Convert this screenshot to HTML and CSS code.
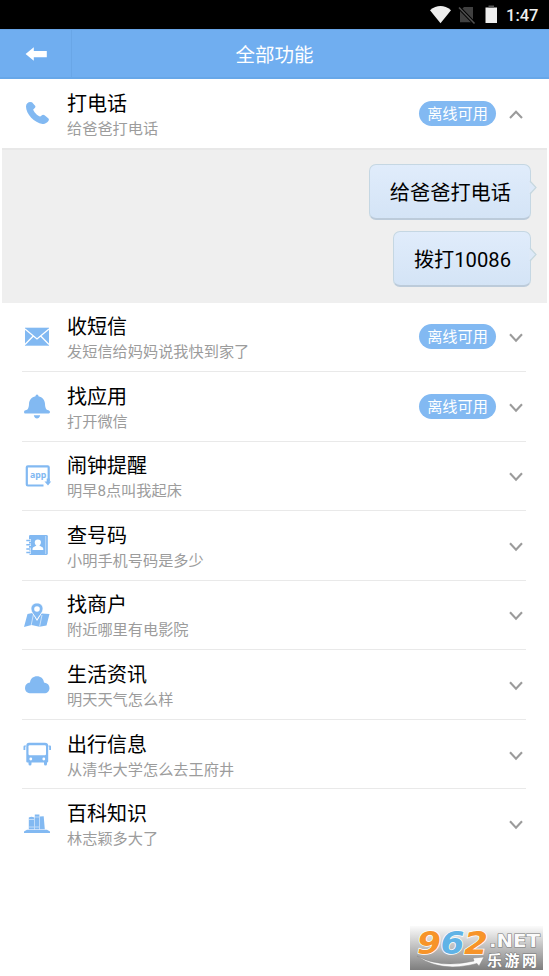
FILE: index.html
```html
<!DOCTYPE html>
<html lang="zh-CN">
<head>
<meta charset="utf-8">
<title>全部功能</title>
<link rel="stylesheet" href="styles.css">
</head>
<body>
<svg class="defs" width="0" height="0">
  <symbol id="down" viewBox="0 0 16 12"><path d="M2 2.2 8 8.6 14 2.2" fill="none" stroke="#9b9b9b" stroke-width="2.1"/></symbol>
  <symbol id="up" viewBox="0 0 16 12"><path d="M2 9 8 2.7 14 9" fill="none" stroke="#9b9b9b" stroke-width="2.1"/></symbol>
</svg>
<div class="status">
  <svg width="72" height="29" viewBox="428 0 72 29">
    <path d="M430 10.2Q440.500 1.800 451 10.200L440.500 23.200Z" fill="#eee"/>
    <path d="M464 7H473V22.300H460V11Z" fill="#404040"/>
    <path d="M459 7.500 474.500 23.500" stroke="#000" stroke-width="3.400"/>
    <path d="M459 7.500 474.500 23.500" stroke="#505050" stroke-width="1.600"/>
    <path d="M485.500 7.500V23H497V7.500Z" fill="#eee"/><path d="M488.500 5.500H494V7.500H488.500Z" fill="#555"/>
  </svg>
  <span class="clock">1:47</span>
</div>
<header class="header">
  <div class="back"><svg width="22" height="16" viewBox="0 0 22 16"><path d="M.6 8 8.800 1.300V5H21.800V11.200H8.800V14.700Z" fill="#fff"/></svg></div>
  <h1>全部功能</h1>
</header>
<main>
  <section class="row open">
    <svg class="icon" viewBox="0 0 30 30"><path d="M4 7.500C4 4.500 6.300 2.900 8.100 2.900L10 3.300 13.300 7Q13.800 8 12.800 9.100L11.200 10.600C11.300 12.500 15.600 17.300 18.300 17.500L20.300 15.900Q21.500 15.300 22.600 16.300L26.500 19.500Q27.500 20.700 26.400 22.100C24.800 24 22.800 25.300 20.500 24.900C12.500 24 3.900 15 4 7.500Z"/></svg>
    <div class="text"><h2>打电话</h2><p>给爸爸打电话</p></div>
    <span class="badge">离线可用</span>
    <svg class="chevron"><use href="#up"/></svg>
  </section>
  <div class="panel">
    <div class="bubble">给爸爸打电话<svg class="tail" viewBox="0 0 8 14"><path d="M0 0 7 6.500 0 13Z" fill="#dde9f8"/><path d="M1 0 7 6.500 1 13" fill="none" stroke="#c5d7df" stroke-width="1.200"/></svg></div>
    <div class="bubble">拨打10086<svg class="tail" viewBox="0 0 8 14"><path d="M0 0 7 6.500 0 13Z" fill="#dde9f8"/><path d="M1 0 7 6.500 1 13" fill="none" stroke="#c5d7df" stroke-width="1.200"/></svg></div>
  </div>
  <section class="row">
    <svg class="icon" viewBox="0 0 30 30"><path d="M3 5.700H27V23.700H3Z"/><path d="M3 7 15 17 27 7M3 22.500 11.300 14M27 22.500 18.700 14" fill="none" stroke="#fff" stroke-width="1.300"/></svg>
    <div class="text"><h2>收短信</h2><p>发短信给妈妈说我快到家了</p></div>
    <span class="badge">离线可用</span>
    <svg class="chevron"><use href="#down"/></svg>
  </section>
  <section class="row">
    <svg class="icon" viewBox="0 0 30 30"><path d="M13.500 5.200Q13.500 3.500 15 3.500T16.500 5.200C20.500 6 22.800 9 23 13 23.200 17 24 18.800 26.500 19.300Q28 19.700 28 21T26.800 22.500H3.200Q2 22.500 2 21T3.500 19.300C6 18.800 6.800 17 7 13 7.200 9 9.500 6 13.500 5.200ZM11.800 24.200H18.200Q17.300 27.500 15 27.500T11.800 24.200Z"/></svg>
    <div class="text"><h2>找应用</h2><p>打开微信</p></div>
    <span class="badge">离线可用</span>
    <svg class="chevron"><use href="#down"/></svg>
  </section>
  <section class="row">
    <svg class="icon" viewBox="0 0 30 30"><path d="M21.500 24.500H5.800Q4.800 24.500 4.800 23.500V6.300Q4.800 5.400 5.800 5.400H25.700Q26.700 5.400 26.700 6.300V20" fill="none" stroke="#82b9f2" stroke-width="2.200"/><path d="M24.700 17.500H27.700V20.500H29.200L26 24.500 22.500 20.500H24.700Z"/><text x="8" y="17" class="app">app</text></svg>
    <div class="text"><h2>闹钟提醒</h2><p>明早8点叫我起床</p></div>
    <svg class="chevron"><use href="#down"/></svg>
  </section>
  <section class="row">
    <svg class="icon" viewBox="0 0 30 30"><rect x="7" y="4.900" width="18.800" height="20" rx="1.300"/><path d="M23.700 6V24" stroke="#fff" stroke-width=".5"/><path d="M4.300 10.500H9M4.300 14.800H9M4.300 19.100H9M4.300 22.500H9" stroke="#fff" stroke-width="2.600"/><path d="M4.300 10.500H8.500M4.300 14.800H8.500M4.300 19.100H8.500M4.300 22.500H8.500" stroke="#82b9f2" stroke-width="1.500"/><path d="M15.800 9.500C20.500 9.500 19 14.500 17.300 15.500L20.800 17.500Q21.400 18 21.300 20H10.500Q10.400 18 11 17.500L14.400 15.500C12.500 14.500 11.500 9.500 15.800 9.500Z" fill="#fff"/></svg>
    <div class="text"><h2>查号码</h2><p>小明手机号码是多少</p></div>
    <svg class="chevron"><use href="#down"/></svg>
  </section>
  <section class="row">
    <svg class="icon" viewBox="0 0 30 30"><path d="M5.500 14 10.500 13 15 21 19.500 13.500 27.500 14 24.500 25.500 17.500 26.800 9.500 25 2 27Z"/><path d="M11.500 14 9.200 25M20 15 17.600 26.500" stroke="#fff" stroke-width=".6"/><path d="M15 3C18.700 3 21 5.500 21 8.800 21 12.500 17.500 15 15 20 12.500 15 9 12.500 9 8.800 9 5.500 11.300 3 15 3Z" stroke="#fff" stroke-width=".8"/><circle cx="15" cy="9" r="2.800" fill="#fff"/></svg>
    <div class="text"><h2>找商户</h2><p>附近哪里有电影院</p></div>
    <svg class="chevron"><use href="#down"/></svg>
  </section>
  <section class="row">
    <svg class="icon" viewBox="0 0 30 30"><path d="M9 23.300C5.500 23.300 3 21.200 3 17.900 3 14.800 5 13 8 12.500 8.500 8.500 11.300 6.300 15 6.300S21.500 8.500 22 12.500C25.500 13 27.500 15 27.500 18S25.500 23.300 22 23.300Z"/></svg>
    <div class="text"><h2>生活资讯</h2><p>明天天气怎么样</p></div>
    <svg class="chevron"><use href="#down"/></svg>
  </section>
  <section class="row">
    <svg class="icon" viewBox="0 0 30 30"><path d="M7 3.800H23Q26.200 3.800 26.200 7V22.500Q26.200 23.500 25 23.500V25Q25 26.500 23.500 26.500T22 25V23.500H9.500V25Q9.500 26.500 8 26.500T6.500 25V23.500H5.500Q4.300 23.500 4.300 22.500V7Q4.300 3.800 7 3.800Z"/><path d="M4 6.500H2.500Q1.500 6.500 1.500 7.800V11H3.300V7.500H4ZM26.500 6.500H28Q29 6.500 29 7.800V11H27.200V7.500H26.500Z"/><rect x="6.500" y="6.300" width="17.500" height="10" rx="1.200" fill="#fff"/><circle cx="8.800" cy="20" r="1.400" fill="#fff"/><circle cx="21.800" cy="20" r="1.400" fill="#fff"/></svg>
    <div class="text"><h2>出行信息</h2><p>从清华大学怎么去王府井</p></div>
    <svg class="chevron"><use href="#down"/></svg>
  </section>
  <section class="row last">
    <svg class="icon" viewBox="0 0 30 30"><path d="M6.800 8.500Q9.500 7 12.300 8.500V20.300H6.800ZM12.800 5.500H17.400V20.300H12.800ZM17.900 7.500 21.700 7.200 22.800 20.300H17.900Z"/><path d="M7 10.500H12M7 18H12M13 8H17M13 18H17" stroke="#fff" stroke-width=".5"/><path d="M5 20.700H25L28 22.500V24H2V22.500Z"/></svg>
    <div class="text"><h2>百科知识</h2><p>林志颖多大了</p></div>
    <svg class="chevron"><use href="#down"/></svg>
  </section>
</main>
<svg class="watermark" viewBox="0 0 133 44">
  <defs><linearGradient id="wm" x1="0" y1="0" x2="0" y2="1"><stop offset="0" stop-color="#fbfbfb"/><stop offset=".5" stop-color="#bdbdbd"/><stop offset="1" stop-color="#7e7e7e"/></linearGradient></defs>
  <rect width="133" height="44" fill="url(#wm)"/>
  <g class="digits"><text x="7" y="27.500" textLength="24" lengthAdjust="spacingAndGlyphs" fill="#f79429">9</text><text x="30.500" y="27.500" textLength="24" lengthAdjust="spacingAndGlyphs" fill="#60b3e6">6</text><text x="54" y="27.500" textLength="24" lengthAdjust="spacingAndGlyphs" fill="#f79429">2</text></g>
  <path d="M7 30Q31 43 64 35L63 32 74 31 69 40 67 37.500Q31 47 7 30Z" fill="#fafafa" stroke="#888" stroke-width=".5"/>
  <text class="net" x="79" y="20.500" textLength="51" lengthAdjust="spacingAndGlyphs">.NET</text>
  <text class="site" x="77" y="39.500" textLength="50">乐游网</text>
</svg>
</body>
</html>
```
FILE: styles.css
```css
* { box-sizing: border-box; }
body { margin: 0; height: 976px; overflow: hidden; background: #fff; color: #000; font-family: Roboto, "Noto Sans CJK SC", sans-serif; }
h1, h2, p { margin: 0; font-weight: 400; white-space: nowrap; }
.defs { position: absolute; }
.status { height: 29px; padding-right: 10px; background: #000; display: flex; justify-content: flex-end; align-items: center; }
.clock { width: 33px; margin-left: 6px; padding-top: 1px; color: #eee; font-size: 16.500px; font-weight: 500; white-space: nowrap; }
.header { height: 50px; display: grid; grid-template-columns: 72px 1fr 72px; align-items: center; background: #70aef0; border-top: 1px solid #68a4e5; border-bottom: 2px solid #67a7e8; }
.back { height: 100%; padding-left: 25px; display: flex; align-items: center; border-right: 1px solid #69a6e7; }
.header h1 { padding-top: 5px; color: #fff; font-size: 19.5px; line-height: 30px; text-align: center; }
.row { height: 69.55px; margin: 0 23px 0 22px; display: flex; align-items: center; border-bottom: 1px solid #e9e9e9; }
.open { height: 69px; border-bottom: 0; }
.last { border-bottom-color: transparent; }
.icon { width: 30px; height: 30px; flex: none; fill: #82b9f2; }
.app { font: 700 8.800px "Noto Sans", sans-serif; }
.text { flex: 1; margin-left: 15px; padding-top: 5px; }
.text h2 { font-size: 20px; line-height: 27px; }
.text p { font-size: 15.200px; line-height: 23px; color: #9c9c9c; }
.badge { width: 77px; height: 25px; border-radius: 13px; background: #82b9f2; color: #fff; font-size: 15.200px; line-height: 26px; text-align: center; white-space: nowrap; }
.chevron { width: 16px; height: 12px; margin: 3px 2px 0 12px; flex: none; }
.panel { height: 154.500px; margin: 0 2px; padding: 13.500px 16px 0 0; display: flex; flex-direction: column; align-items: flex-end; gap: 11px; background: #efefef; border-top: 2px solid #e8e8e8; }
.bubble { position: relative; height: 56px; padding: 0 19px 0 20px; border: 1px solid #c5d7e3; border-bottom: 2px solid #bccbda; border-radius: 7px; background: linear-gradient(#e0ecfb, #d4e4f6); font-size: 20.200px; line-height: 57px; white-space: nowrap; }
.tail { position: absolute; left: 100%; top: 16px; width: 8px; height: 14px; margin-left: -1px; }
.watermark { position: absolute; left: 410px; top: 926px; width: 133px; height: 44px; overflow: visible; }
.digits { font: italic 700 32px "DejaVu Sans", sans-serif; stroke: #fff; stroke-width: 1.500px; paint-order: stroke; }
.net { font: 700 17px "DejaVu Sans", sans-serif; fill: #fafafa; stroke: #777; stroke-width: 1px; paint-order: stroke; }
.site { font: 700 15px "Noto Sans CJK SC", sans-serif; fill: #fff; stroke: #777; stroke-width: 1px; paint-order: stroke; }
```
